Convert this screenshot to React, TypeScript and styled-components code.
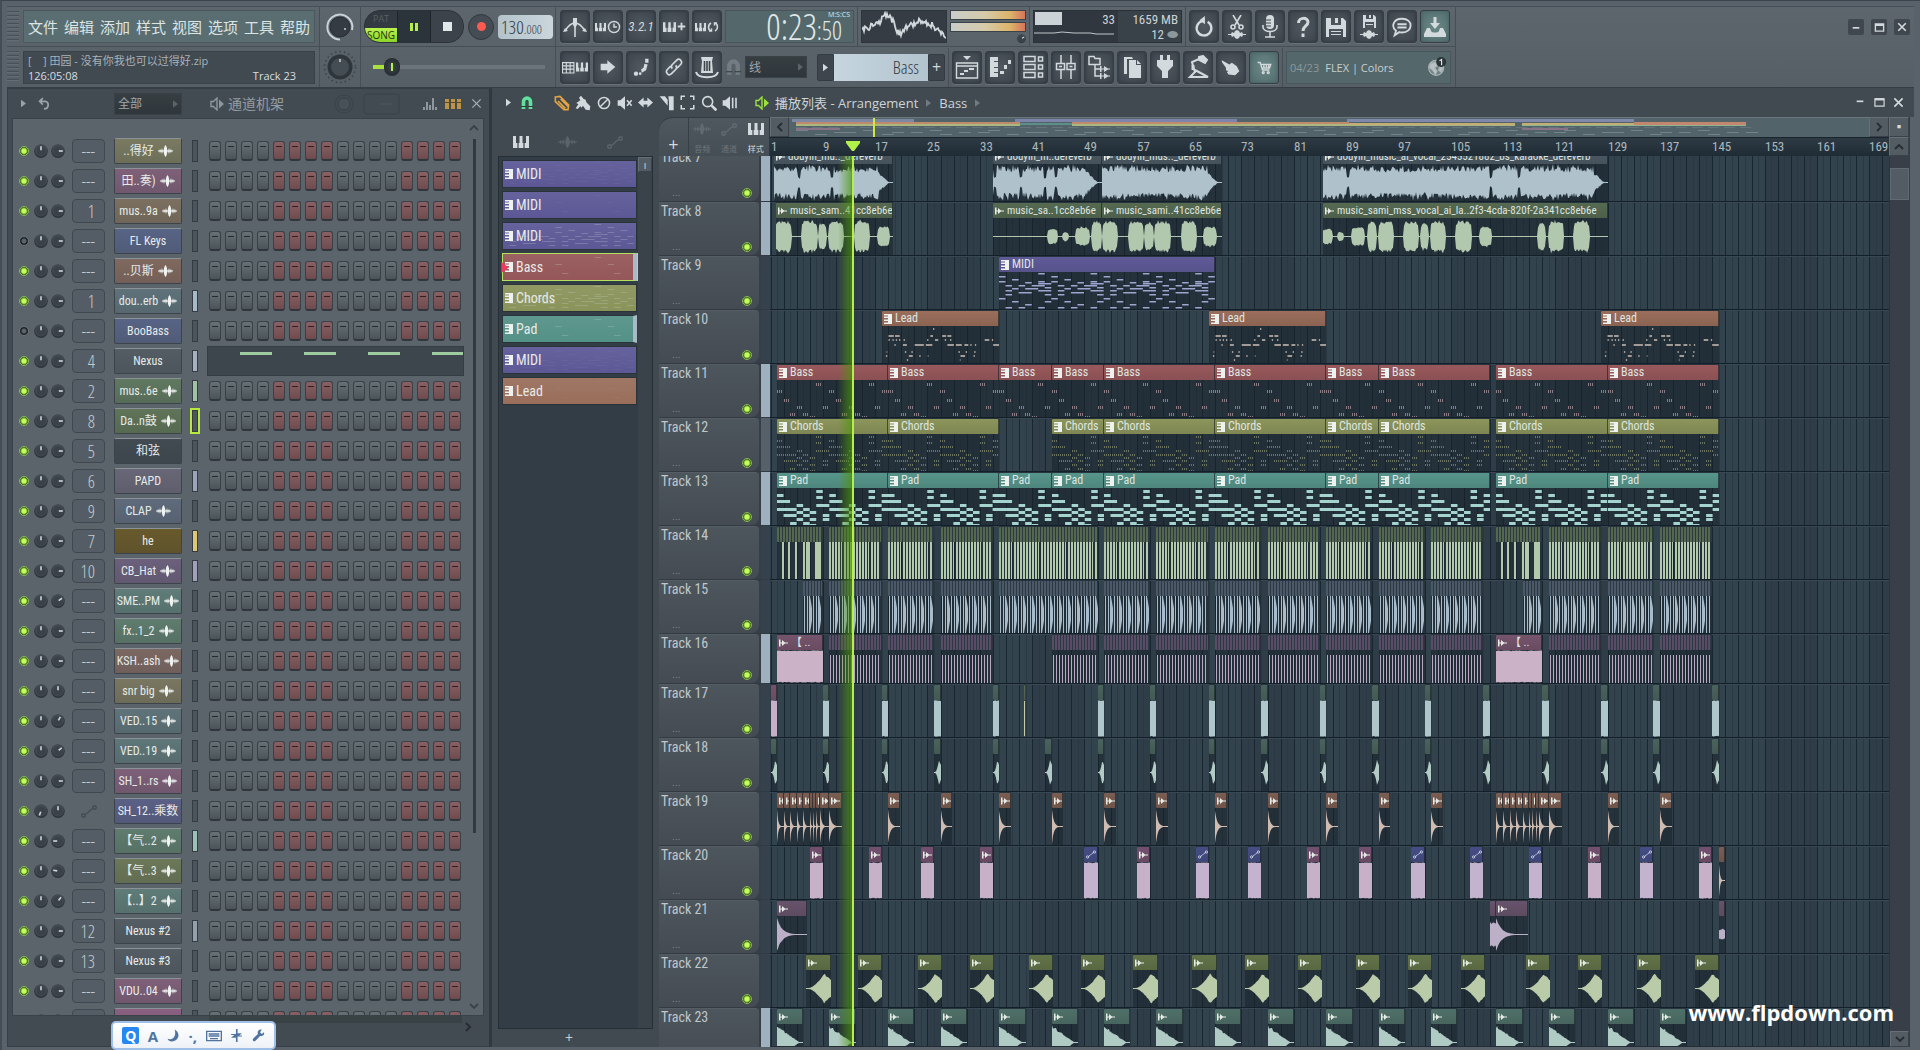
import React from 'react';
import styled, { createGlobalStyle, css } from 'styled-components';

const NARROW = '"Roboto Condensed", "Open Sans Condensed", "Noto Sans CJK SC", sans-serif';
const DIGITS = '"Open Sans Condensed Light", "Roboto Condensed", "Open Sans Condensed", sans-serif';
const NARROW_STACK = `"Noto Sans Condensed", "Noto Sans SemiCondensed", ${NARROW}`;
const DIGIT_STACK = DIGITS;
const SANS = '"Open Sans", "Noto Sans", "Noto Sans CJK SC", sans-serif';
const INK = '#d3dadd';
const GREEN = '#b4f04a';

const GlobalStyle = createGlobalStyle`
  * { box-sizing: border-box; }
  html, body { margin: 0; padding: 0; background: #3a4249; overflow: hidden; }
  body { font-family: ${SANS}; color: ${INK}; font-size: 12px; }
  button, select, input { font: inherit; color: inherit; margin: 0; padding: 0; border: 0; background: none; }
  button { cursor: pointer; }
  svg { display: block; flex: none; }
`;

/* ---------- timeline maths and generated drawings ---------- */

const BAR = 6.54;
const px = (bar: number) => Math.round(bar * BAR + 0.5);

const seeded = (seed: number) => {
  let s = seed * 7919 + 13;
  return () => {
    s = (s * 16807) % 2147483647;
    return (s % 10000) / 10000;
  };
};

const wavePath = (w: number, h: number, seed: number, env: (t: number, x: number) => number, rough = 0.25) => {
  const r = seeded(seed);
  const mid = h / 2;
  const top: string[] = [];
  const bottom: string[] = [];
  for (let x = 0; x <= w; x += 1) {
    const e = env(x / w, x);
    const a = Math.max(0.5, e * (mid - 1) * (1 - rough * r()));
    const b = Math.max(0.5, e * (mid - 1) * (1 - rough * r()));
    top.push(`${x} ${(mid - a).toFixed(1)}`);
    bottom.unshift(`${x} ${(mid + b).toFixed(1)}`);
  }
  return `M${top.join('L')}L${bottom.join('L')}Z`;
};

type Note = [number, number, number];

const PAD: Note[] = [
  [2, 6, 7], [6, 0, 1], [8, 6, 7], [12, 0, 2], [16, 3, 4], [16, 6, 8], [20, 0, 3], [20, 4, 5],
  [23, 3, 4], [23, 5, 6], [26, 1, 3], [26, 4, 5], [30, 3, 4], [30, 5, 6], [30, 7, 8], [26, 7, 8], [34, 2, 3], [34, 4, 5], [36, 5, 6],
];
const BASS: Note[] = [[3, 6, 7], [10, 0, 1], [19, 1, 2], [26, 3, 4], [26, 7, 8], [33, 2, 3], [33, 4, 5], [36, 5, 6]];
const KEYS: Note[] = [
  [1, 6, 7], [4, 0, 1], [7, 2, 3], [9, 6, 7], [9, 0, 1], [10, 4, 5], [11, 6, 8], [13, 1, 2], [13, 3, 4], [13, 5, 7], [15, 7, 8],
  [16, 2, 3], [16, 4, 6], [18, 1, 2], [18, 6, 8], [20, 3, 5], [22, 1, 2], [22, 7, 8], [26, 0, 1], [29, 2, 3], [29, 7, 8], [32, 4, 5], [35, 1, 2], [35, 3, 4], [35, 6, 7],
];
const LEAD: Note[] = [
  [2, 7.8, 8], [9, 1, 1.8], [9, 2, 2.7], [9, 7.4, 7.8], [9, 9.2, 9.8], [9, 10, 10.6], [13, 1, 1.2], [13, 1.6, 1.8], [13, 2.1, 2.3], [13, 2.6, 2.8],
  [13, 3.3, 3.5], [13, 6.9, 7.1], [13, 8.1, 8.6], [13, 9.6, 9.8], [13, 10.4, 10.6], [13, 15.7, 16.4], [13, 16.8, 17], [18, 1.9, 2.1], [18, 3.2, 3.8], [18, 5, 6.4],
  [18, 6.7, 7.7], [18, 10, 11], [18, 11.3, 12.2], [18, 12.6, 13.2], [18, 13.5, 13.7], [18, 14.2, 14.4], [18, 17, 18], [25, 0.7, 0.8], [25, 3.5, 3.7],
  [25, 4.5, 4.7], [25, 11.7, 11.9], [25, 12.8, 13], [25, 14.1, 14.3], [29, 0.6, 0.8], [29, 4.1, 4.7], [29, 5.7, 5.9], [29, 7, 7.1], [29, 12, 12.7], [29, 14, 14.2], [33, 3.8, 4], [33, 11.9, 12],
];

const noteRects = (notes: Note[], bars: number, period: number, ticks: boolean, color: string, tall: number) => {
  const out: React.ReactNode[] = [];
  for (let base = 0; base < bars; base += period) {
    notes.forEach(([y, a, b], i) => {
      const s = base + a;
      const e = Math.min(base + b, bars);
      if (s >= bars) return;
      if (!ticks) {
        out.push(<rect key={`${base}-${i}`} x={s * BAR} y={y} width={(e - s) * BAR} height={tall} fill={color} />);
        return;
      }
      for (let x = s * BAR; x < e * BAR - 1; x += 2) {
        out.push(<rect key={`${base}-${i}-${x}`} x={Math.round(x)} y={y} width={1} height={tall} fill={color} />);
      }
    });
  }
  return out;
};

/* ---------- shared pieces ---------- */

const Icon = ({ d, size = 24, fill, stroke = INK, sw = 1.6, children }: { d?: string; size?: number; fill?: string; stroke?: string; sw?: number; children?: React.ReactNode }) => (
  <svg width={size} height={size} viewBox="0 0 24 24" fill={fill ?? 'none'} stroke={stroke} strokeWidth={sw} aria-hidden="true">
    {d && <path d={d} />}
    {children}
  </svg>
);

const Piano = ({ w = 16, color = INK, gap = '#3d444c' }: { w?: number; color?: string; gap?: string }) => (
  <svg width={w} height={12} viewBox="0 0 16 12" aria-hidden="true">
    <path fill={color} d="M0 0H3V7H4.500V12H0ZM5.500 12V7H6.500V0H9.500V7H10.500V12ZM13 0H16V12H11.500V7H13Z" />
    <path stroke={gap} strokeWidth="0.500" d="M5 7v5M11 7v5" />
  </svg>
);

const WaveGlyph = ({ color = '#f1f4f2', w = 15 }: { color?: string; w?: number }) => (
  <svg width={w} height={12} viewBox="0 0 15 14" preserveAspectRatio="none" aria-hidden="true">
    <path fill={color} d="M0 6.300H1.500L2 4.500L2.800 6.300H3.300L4 3.500L4.800 6.300H5.600L6.400 2L7.500 0L8.600 2L9.400 6.300H10.200L11 3.500L11.700 6.300H12.200L13 4.500L13.500 6.300H15V7.700H13.500L13 9.500L12.200 7.700H11.700L11 10.500L10.200 7.700H9.400L8.600 12L7.500 14L6.400 12L5.600 7.700H4.800L4 10.500L3.300 7.700H2.800L2 9.500L1.500 7.700H0Z" />
  </svg>
);

const LinkGlyph = ({ color = '#59636b', w = 16 }: { color?: string; w?: number }) => (
  <svg width={w} height={13} viewBox="0 0 16 13" fill="none" stroke={color} strokeWidth="1.400" aria-hidden="true">
    <circle cx="2.500" cy="10.500" r="1.800" /><circle cx="13.500" cy="2.500" r="1.800" /><path d="M4 9.500 6.500 8l3-3L12 3.500" />
  </svg>
);

const Arrow = ({ color = '#a9b2b8', dir = 0, w = 6, h = 9 }: { color?: string; dir?: number; w?: number; h?: number }) => (
  <svg width={w} height={h} viewBox="0 0 6 9" aria-hidden="true"><path fill={color} d="M0 0 6 4.500 0 9Z" transform={`rotate(${dir} 3 4.500)`} /></svg>
);

const Chevron = ({ dir = 0, color = '#262d33' }: { dir?: number; color?: string }) => (
  <svg width={10} height={10} viewBox="0 0 10 10" fill="none" stroke={color} strokeWidth="1.800" aria-hidden="true"><path d="M3 1 7 5 3 9" transform={`rotate(${dir} 5 5)`} /></svg>
);

const Magnet = ({ color, w = 14 }: { color: string; w?: number }) => (
  <svg width={w} height={w} viewBox="0 0 14 14" fill="none" aria-hidden="true">
    <path stroke={color} strokeWidth="3.600" d="M3.500 13V6a3.500 4 0 0 1 7 0v7" />
    <path stroke="#2b3a38" strokeWidth="1" d="M1 10.500h5M8 10.500h5" />
  </svg>
);

const Speaker = ({ color }: { color: string }) => (
  <svg width={14} height={14} viewBox="0 0 14 14" aria-hidden="true">
    <path fill="none" stroke={color} strokeWidth="1.400" d="M1 4.500h2.500L7 1v12L3.500 9.500H1Z" /><path fill={color} d="M9 2.500 14 7 9 11.500Z" />
  </svg>
);

const Knob = ({ size, angle }: { size: number; angle: number }) => (
  <svg width={size} height={size} viewBox="0 0 14 14" aria-hidden="true">
    <circle cx="7" cy="7.300" r="6.700" fill="#2c3339" /><circle cx="7" cy="6.600" r="6" fill="#434b52" /><circle cx="7" cy="7" r="4.600" fill="#3a4148" />
    <path stroke="#cfd6da" strokeWidth="1.600" d="M7 2.200v4" transform={`rotate(${angle} 7 7)`} />
  </svg>
);

/* ---------- frame and top bar ---------- */

const Frame = styled.div`
  height: 100vh; display: flex; flex-direction: column; position: relative;
  padding: 5px 6px 3px 5px; background: #59616a; border-top: 1px solid #3b434b; border-left: 2px solid #444c54; overflow: hidden;
`;
const TopBar = styled.header`
  display: flex; height: 82px; flex: none; background: linear-gradient(#5d656d, #565e66);
  border-top: 1px solid #454d55; border-bottom: 1px solid #363d44;
`;
const BarColumn = styled.div<{ $w?: number }>`
  display: grid; grid-template-rows: 39px 41px; border-right: 1px solid #464e56; width: ${p => (p.$w ? `${p.$w}px` : 'auto')}; flex: none;
`;
const BarRow = styled.div<{ $pad?: string }>`
  display: flex; align-items: center; gap: 3px; padding: ${p => p.$pad ?? '0'};
  & + & { border-top: 1px solid #464e56; }
`;
const Grip = styled.span`
  width: 12px; height: 32px; margin-right: 1px; flex: none;
  background: repeating-linear-gradient(#474f57 0 1px, #646c74 1px 2px, transparent 2px 4px);
`;
const Divider = styled.span`width: 1px; height: 39px; background: #464e56; flex: none;`;
const MenuBar = styled.nav`
  flex: 1; height: 33px; display: flex; align-items: center; justify-content: space-between; padding: 0 4px;
  background: #5a6e72; border: 1px solid #4b595f;
`;
const MenuButton = styled.button`font-size: 15px; line-height: 24px; color: #dce4e4; font-family: "Noto Sans CJK SC", ${SANS};`;
const Hint = styled.div`
  flex: 1; height: 33px; background: #414951; border: 1px solid #384048; padding: 1px 4px; font-size: 11px; line-height: 15px; color: #c3cacf;
`;
const HintLine = styled.div`display: flex; justify-content: space-between; padding-right: 14px; white-space: pre; color: #d7dde0;
  &:first-child { color: #aab2b8; }`;
const Center = styled.div`display: grid; place-items: center; width: 100%;`;

const Transport = styled.div`
  display: flex; height: 33px; width: 100px; border-radius: 16px; overflow: hidden; border: 1px solid #2c3238; background: #333a41; flex: none;
`;
const ModeButton = styled.button`
  width: 32px; display: grid; grid-template-rows: 17px 14px; font-size: 9px; line-height: 16px; color: #596168; text-align: center;
`;
const ModeOn = styled.span`background: linear-gradient(#b9f24c, #8cd52a); color: #27330f; line-height: 14px; font-size: 10px;`;
const TransportButton = styled.button<{ $active?: boolean }>`
  flex: 1; display: grid; place-items: center; border-left: 1px solid #1f252a; background: ${p => (p.$active ? '#2c343b' : '#3c434b')};
`;
const RecordButton = styled.button`
  width: 26px; height: 26px; border-radius: 50%; border: 1px solid #30373e; background: #454c54; display: grid; place-items: center; margin: 0 1px; flex: none;
`;
const RecordDot = styled.span`width: 9px; height: 9px; border-radius: 50%; background: #ff5a50;`;
const Tempo = styled.div`
  width: 55px; height: 24px; border-radius: 4px; background: linear-gradient(90deg, #b4c3cb, #cad6dc); color: #323b44;
  font: 19px/24px ${DIGIT_STACK}; padding-left: 3px; flex: none; display: flex; align-items: baseline;
`;
const Small = styled.span`font-size: 13px;`;
const Volume = styled.input.attrs({ type: 'range' })`
  appearance: none; width: 172px; height: 20px; margin-left: 12px;
  background: linear-gradient(90deg, #a9e23c 0 12px, #6c747b 12px) center / 100% 4px no-repeat;
  &::-webkit-slider-thumb {
    appearance: none; width: 16px; height: 18px; border-radius: 8px;
    background: linear-gradient(90deg, transparent 7px, ${GREEN} 7px 9px, transparent 9px) center / 100% 8px no-repeat, radial-gradient(#3d464d, #1c2227);
  }
`;
const ToolButton = styled.button<{ $teal?: boolean }>`
  width: 30px; height: 33px; display: grid; place-items: center; flex: none; border-radius: 3px; border: 1px solid #363d45;
  background: ${p => (p.$teal ? 'radial-gradient(#6a8a87, #51696c)' : 'radial-gradient(#505860, #3c434b)')};
  box-shadow: inset 0 0 3px ${p => (p.$teal ? '#466062' : '#2f363d')}, 0 1px 0 #687078;
`;
const Stack = styled.span`display: flex; align-items: center; justify-content: center; gap: 1px;`;
const Countdown = styled.span`font: italic 13px/14px ${NARROW_STACK}; color: ${INK};`;
const TimePanel = styled.div`
  width: 129px; height: 33px; background: #54676b; border: 1px solid #47555b; display: flex; justify-content: flex-end;
  font: 36px/31px ${DIGIT_STACK}; color: #dfe7e8; padding-right: 3px; flex: none;
`;
const TimeSide = styled.span`display: flex; flex-direction: column; align-items: flex-end;`;
const TimeMinor = styled.span`font-size: 25px; line-height: 22px; padding-right: 8px;`;
const TimeUnit = styled.span`font: 7px/8px ${SANS};`;
const Scope = styled.div`width: 86px; height: 33px; background: #353c44; border: 1px solid #2e353c; flex: none;`;
const Meters = styled.div`width: 76px; height: 33px; display: flex; flex-direction: column; gap: 2px; flex: none; align-items: flex-end;`;
const Meter = styled.div`width: 100%; height: 10px; border: 1px solid #3b434a; background: linear-gradient(90deg, #c9ccca, #d6cbaa 45%, #dcb469 80%, #d8745a);`;
const Cpu = styled.div`
  width: 149px; height: 33px; background: #30373e; border: 1px solid #2a3137; display: grid; grid-template-columns: 84px 1fr; flex: none;
  font: 13px/15px ${NARROW_STACK}; color: #ccd3d7;
`;
const CpuCell = styled.div<{ $alt?: boolean }>`background: ${p => (p.$alt ? '#394149' : '#30373e')}; padding: 1px 3px 0 0; text-align: right; position: relative;`;
const CpuBlock = styled.span`position: absolute; left: 1px; top: 1px; width: 27px; height: 13px; background: #ccd3d6;`;
const DarkSelect = styled.select<{ $w: number }>`
  appearance: none; width: ${p => p.$w}px; height: 22px; background: linear-gradient(#363e42, #30373c); border: 1px solid #3a4247;
  padding-left: 3px; font-size: 12px; color: #9fa7ac; flex: none;
`;
const SelectWrap = styled.label<{ $gap?: number }>`position: relative; display: flex; align-items: center; flex: none; margin-left: ${p => p.$gap ?? 0}px;
  & > svg { position: absolute; right: 4px; pointer-events: none; }`;
const PatternBox = styled.div`display: flex; width: 128px; height: 27px; margin-left: 7px; flex: none;`;
const PatternStep = styled.button`width: 17px; background: #3e454d; border: 1px solid #343b42; border-radius: 2px; display: grid; place-items: center; font-size: 16px; line-height: 16px;`;
const PatternSelect = styled.select`
  appearance: none; flex: 1; background: linear-gradient(90deg, #c6d5de, #b3c4cf); color: #333c45; font: 18px/24px ${DIGIT_STACK}; text-align: right; text-align-last: right; padding-right: 9px;
`;
const News = styled.div`
  width: 165px; height: 33px; background: #54676a; border: 1px solid #48575c; display: flex; align-items: center; gap: 6px; padding: 0 3px; font-size: 11px; color: #c7d0d2; flex: none;
`;
const Dim = styled.span`color: #8b999c;`;
const Push = styled.span<{ $pr?: number }>`margin-left: auto; display: flex; align-items: center; gap: 7px; padding-right: ${p => p.$pr ?? 0}px;`;
const Bottom = styled.span`margin-top: auto;`;
const WindowButton = styled.button`width: 16px; height: 16px; background: #40474f; border-radius: 2px; display: grid; place-items: center;`;
const WindowButtons = styled.div`margin-left: auto; display: flex; gap: 7px; height: 40px; align-items: center; padding-right: 4px;`;

/* ---------- work area ---------- */

const Work = styled.main`flex: 1; min-height: 0; display: flex;`;
const Rack = styled.section`width: 485px; flex: none; display: flex; flex-direction: column; background: #434b52; border: 1px solid #373e45; border-right: 3px solid #31383e; padding: 0 5px 0 4px;`;
const PanelHead = styled.div`height: 29px; flex: none; display: flex; align-items: center; color: #8d959b;`;
const RackTitle = styled.h2`margin: 0; font-size: 14px; line-height: 18px; font-weight: 400; color: #949ca2;`;
const RackBody = styled.div`flex: 1; min-height: 0; background: #5b646b; border: 1px solid #3a4148; display: flex; overflow: hidden;`;
const ChannelList = styled.div`flex: 1; padding-top: 17px;`;
const ChannelRow = styled.div`height: 30px; display: flex; align-items: center; padding-left: 6px;`;
const Led = styled.button<{ $on: boolean }>`
  width: 10px; height: 10px; border-radius: 50%; margin-right: 5px; flex: none;
  background: ${p => (p.$on ? 'radial-gradient(#c4ff5e 0 2px, #2f5212 4px)' : 'radial-gradient(#5b646b 0 2px, #1d2226 3px)')};
  border: 1px solid ${p => (p.$on ? '#86b957' : '#6b7379')};
`;
const KnobPair = styled.div`display: flex; gap: 3px; margin-right: 7px;`;
const MixerSlot = styled.button`
  width: 33px; height: 24px; border: 1px solid #40484f; border-radius: 4px; background: #545d65; margin-right: 9px; flex: none;
  font: 18px/20px ${DIGIT_STACK}; color: #c3cbd0; text-align: right; padding-right: 9px;
`;
const MixerLink = styled.span`width: 33px; margin-right: 9px; display: grid; place-items: center; flex: none;`;
const ChannelButton = styled.button<{ $c: string }>`
  width: 68px; height: 26px; margin-right: 10px; flex: none; display: flex; align-items: center; justify-content: center; gap: 4px;
  background: linear-gradient(${p => p.$c}, color-mix(in srgb, ${p => p.$c} 86%, #20262b)); border: 1px solid #3c434a; border-top-color: #8b9398; border-radius: 2px;
  font: 12px/18px ${NARROW_STACK}; color: #e6ebea; white-space: nowrap;
`;
const SelectLed = styled.button<{ $c?: string; $sel?: boolean }>`
  width: 6px; height: 22px; margin-right: 11px; flex: none; background: ${p => p.$c ?? '#4c555c'}; border: 1px solid #343b42;
  outline: ${p => (p.$sel ? '2px solid #b7ea3f' : 'none')};
`;
const Steps = styled.div`display: flex; gap: 4px;`;
const Step = styled.button<{ $red: boolean }>`
  width: 12px; height: 20px; border-radius: 3px; border: 1px solid #394046; border-bottom: 2px solid #30363b;
  background: ${p => (p.$red
    ? 'linear-gradient(transparent 4px, #331f22 4px 5px, transparent 5px) center / 6px 100% no-repeat, linear-gradient(#8a6064, #6e4b4f)'
    : 'linear-gradient(transparent 4px, #23292d 4px 5px, transparent 5px) center / 6px 100% no-repeat, linear-gradient(#687176, #4b5459)')};
`;
const MiniRoll = styled.div`width: 257px; height: 30px; margin-left: -2px; background: #3d464d; border: 1px solid #353d44;`;
const RackScroll = styled.div`width: 18px; display: flex; flex-direction: column; align-items: center; padding: 4px 0;`;
const RackThumb = styled.span`width: 3px; background: #323940; flex: 0.805; margin-top: 6px;`;
const RackFoot = styled.div`height: 30px; flex: none; display: flex; justify-content: space-between; padding: 0 10px 0 197px;`;
const FootTrack = styled.span`width: 257px; height: 7px; background: #394244;`;

const Playlist = styled.section`flex: 1; min-width: 0; display: flex; flex-direction: column; background: #424a51;`;
const PlayHead = styled(PanelHead)`padding-left: 13px; gap: 0;`;
const IconButton = styled.button<{ $w?: number }>`width: ${p => p.$w ?? 21}px; height: 22px; display: grid; place-items: center; flex: none;`;
const Spacer = styled.span<{ $w: number }>`width: ${p => p.$w}px; flex: none;`;
const Crumb = styled.h2`margin: 0; font-size: 13px; line-height: 18px; font-weight: 400; color: #cdd4d8; display: flex; align-items: center; gap: 8px; padding-left: 3px; white-space: nowrap;`;
const PlayBody = styled.div`flex: 1; min-height: 0; display: flex;`;
const Picker = styled.aside`width: 167px; flex: none; padding: 0 6px 0 6px; display: flex; flex-direction: column;`;
const PickerTabs = styled.div`height: 39px; display: flex; align-items: flex-end; padding: 0 0 3px 7px; gap: 16px;`;
const PickerBox = styled.div`flex: 1; background: #323d46; border: 1px solid #262f36; display: flex; justify-content: space-between;`;
const PatternList = styled.div`width: 141px; padding: 3px 0 0 3px; display: flex; flex-direction: column; gap: 3px;`;
const PatternItem = styled.button<{ $c: string; $sel?: boolean; $strip?: boolean }>`
  width: 135px; height: 28px; display: flex; align-items: center; gap: 3px; padding-left: 2px; position: relative; text-align: left;
  background: linear-gradient(color-mix(in srgb, ${p => p.$c} 94%, #fff), ${p => p.$c}); border: 1px solid ${p => (p.$sel ? '#b5e35d' : '#2a333a')};
  ${p => p.$strip && css`border-right: 4px solid #a9bac6;`}
  ${p => p.$sel && css`box-shadow: 1px 0 0 #b5e35d;`}
  font: 14px/20px ${NARROW_STACK}; color: #e7ebea;
`;
const Texture = styled.svg`position: absolute; inset: 0; width: 100%; height: 100%; opacity: 0.25;`;
const Selected = styled.span`position: absolute; left: -2px; top: 8px;`;
const PickerScroll = styled.div`width: 14px; background: #3a424a; font-size: 10px;`;
const ScrollButton = styled.button<{ $w?: number; $h?: number }>`
  width: ${p => p.$w ?? 19}px; height: ${p => p.$h ?? 19}px; background: #535b63; border: 1px solid #6a727a; border-color: #666e76 #3a4148 #3a4148 #666e76; display: grid; place-items: center; flex: none;
`;
const AddPattern = styled.button`height: 18px; width: 142px; font-size: 14px; line-height: 14px; color: #c9d0d4;`;

const Arranger = styled.div`flex: 1; min-width: 0; display: flex; flex-direction: column;`;
const ArrangerHead = styled.div`height: 39px; flex: none; display: flex;`;
const TabBlock = styled.div`
  width: 111px; flex: none; display: flex; background: linear-gradient(#4f575f, #464e55); border-top: 1px solid #333a41; border-right: 1px solid #30373d;
  border-top-left-radius: 14px;
`;
const AddTrack = styled.button`width: 30px; border-right: 1px solid #373e45; font-size: 18px; line-height: 20px; padding-top: 14px;`;
const TabLabels = styled.div`flex: 1; display: grid; grid-template-columns: repeat(3, 1fr); justify-items: center; align-items: center; font-size: 8px; line-height: 10px; color: #6c747b; padding-top: 2px;`;
const TabLabel = styled.button<{ $on?: boolean }>`display: grid; grid-template-rows: 14px 10px; justify-items: center; align-items: center; gap: 8px; color: ${p => (p.$on ? '#d3dadd' : '#6c747b')};`;
const RulerBlock = styled.div`flex: 1; min-width: 0; display: flex; flex-direction: column;`;
const MapRow = styled.div`height: 20px; display: flex;`;
const MiniMap = styled.div`flex: 1; min-width: 0; background: #53636a; border-top: 1px solid #6a777d; overflow: hidden;`;
const RulerRow = styled.div`height: 19px; display: flex;`;
const Ruler = styled.div`flex: 1; min-width: 0; background: linear-gradient(#2d3a43, #1f2c35); border-top: 1px solid #19242c; display: flex; overflow: hidden; position: relative; font: 13px/17px ${NARROW_STACK}; color: #abb7be; padding-left: 1px;`;
const RulerMark = styled.span`flex: none;`;
const HeadMarker = styled.span`position: absolute; left: 76px; top: 3px;`;
const ArrangerBody = styled.div`flex: 1; min-height: 0; display: flex; overflow: hidden;`;
const TrackHeads = styled.div`width: 111px; flex: none; overflow: hidden; background: #363f47;`;
const Scrolled = styled.div`margin-top: -8px;`;
const TrackHead = styled.div<{ $h: number }>`height: ${p => p.$h}px; display: flex; border-bottom: 1px solid #333a41;`;
const TrackLabel = styled.div`
  width: 100px; background: linear-gradient(#4e565d, #444b52); border-radius: 0 4px 8px 0; border-top: 1px solid #565e65; padding: 0 3px 0 2px; display: flex; flex-direction: column; justify-content: space-between;
  font: 14px/17px ${NARROW_STACK}; color: #bfc7cc;
`;
const TrackFoot = styled.div`display: flex; justify-content: space-between; align-items: center; padding: 0 4px 2px 11px; color: #7b838a; line-height: 12px; font-size: 11px;
  & > button { margin: 0; }`;
const TrackStrip = styled.span<{ $c: string }>`width: 9px; margin-left: 2px; background: ${p => p.$c};`;
const Canvas = styled.div`flex: 1; min-width: 0; position: relative; overflow: hidden; background: #2e3d48; border-bottom: 1px solid #242d34;`;
const GridSvg = styled.svg`position: absolute; left: 0; top: 0;`;
const Lane = styled.div<{ $h: number }>`height: ${p => p.$h}px; position: relative; border-bottom: 1px solid #13202a; box-shadow: 0 1px 0 #384752;`;
const ClipBox = styled.div`position: absolute; top: 0; bottom: 0; display: flex; flex-direction: column; background: rgba(24, 34, 40, 0.5); overflow: hidden;`;
const ClipHead = styled.div<{ $c: string; $cut?: boolean }>`
  height: 15px; flex: none; margin-top: 1px; background: ${p => (p.$cut ? `repeating-linear-gradient(90deg, ${p.$c} 0 2px, #2d3942 2px 3px)` : `linear-gradient(${p.$c}, color-mix(in srgb, ${p.$c} 90%, #000))`)};
  border-right: 1px solid rgba(20, 28, 34, 0.6); border-radius: 1px; display: flex; align-items: center; gap: 3px; padding-left: 2px; overflow: hidden; white-space: nowrap;
`;
const ClipText = styled.span<{ $small?: boolean }>`font: ${p => (p.$small ? 11 : 12)}px/15px ${NARROW_STACK}; color: #dfe5e0;`;
const Playhead = styled.div`position: absolute; top: 0; bottom: 0; left: 68px; width: 16px; background: linear-gradient(90deg, rgba(90, 150, 20, 0), rgba(78, 150, 12, 0.65) 13px, rgba(70, 130, 10, 0.8) 14px, ${GREEN} 14px); pointer-events: none;`;
const VScroll = styled.div`width: 20px; flex: none; background: #383f48; display: flex; flex-direction: column; border-left: 1px solid #2b3239;`;
const VThumb = styled.span`height: 32px; margin-top: 12px; background: #535b65; border: 1px solid #626a73;`;
const RightEdge = styled.span`width: 5px; flex: none; background: #59616a; border-left: 1px solid #363d44;`;

const ImeBar = styled.div`
  position: absolute; left: 109px; bottom: 0; width: 165px; height: 29px; background: linear-gradient(#fff, #eef2f7); border: 2px solid #9fbfe8; border-radius: 5px;
  display: flex; align-items: center; justify-content: space-around; padding: 0 5px; color: #50749f;
`;
const ImeLogo = styled.button`width: 17px; height: 17px; border-radius: 2px; background: #2787f0; color: #fff; font: bold 14px/16px ${SANS};`;
const ImeText = styled.button`font: bold 15px/18px ${SANS}; color: #50749f;`;
const Watermark = styled.a`position: absolute; right: 26px; bottom: 23px; font: 700 22px/30px ${SANS}; color: #fff; text-decoration: none;`;

/* ---------- toolbar icons ---------- */

const toolsTopLeft: [string, React.ReactNode][] = [
  ['Metronome', <Icon key="a"><path d="M2 16c3-5 6-8 10-8s7 3 10 8M12 9v13" /><path fill={INK} stroke="none" d="M10 3h4v7l-2 3-2-3ZM0 17l5-1-3-3ZM24 17l-5-1 3-3Z" /></Icon>],
  ['Wait for input', <Stack key="b"><Piano w={11} /><Icon size={14} sw={2.4}><circle cx="12" cy="12" r="9.500" /><path d="M12 6v6h5" /></Icon></Stack>],
  ['Countdown', <Countdown key="c">3.2.1</Countdown>],
  ['Overdub', <Stack key="d"><Piano w={13} /><Icon size={9} sw={5} d="M12 2v20M2 12h20" /></Stack>],
  ['Loop record', <Stack key="e"><Piano w={11} /><Icon size={12} sw={3} d="M8 4C1 8 2 18 8 20M16 20c7-4 6-14 0-16M4 20h5v-5M20 4h-5v5" /></Stack>],
];
const toolsBottomLeft: [string, React.ReactNode][] = [
  ['Typing keyboard', <Stack key="a"><Icon size={13} sw={2} d="M1 3h21v19H1ZM1 9h21M1 15h21M8 3v19M15 3v19" /><Piano w={12} /></Stack>],
  ['Forward', <Icon key="b" size={16} fill={INK} stroke="none" d="M1 7h10V2l12 10-12 10v-5H1Z" />],
  ['Glide', <Icon key="c" size={20} fill={INK} stroke="none"><path d="M17 2h4v5h-4ZM16 8l4 1-2 7-5 3-1-4 3-2Z" /><circle cx="6" cy="20" r="2.600" /><circle cx="11" cy="20" r="1.600" /></Icon>],
  ['Link', <Icon key="d" size={20} sw={2} d="M10 14c-2-2-1-4 0-5l5-5c2-2 4-2 5 0 2 2 1 4 0 5l-4 4M14 10c2 2 1 4 0 5l-5 5c-2 2-4 2-5 0-2-2-1-4 0-5l4-4" />],
  ['Hat', <Icon key="e"><path fill={INK} stroke="none" d="M6 2h12l-1 4 1 12H6L7 6Z" /><path stroke="#3d444c" d="M9.500 6v10M12 6v10M14.500 6v10" /><path strokeWidth="2" d="M1 17c2 7 20 7 22 0" /></Icon>],
];
const toolsTopRight: [string, React.ReactNode][] = [
  ['Undo', <Icon key="a" size={22} sw={2.6}><path d="M10 5.500a8 8 0 1 0 6 .8" /><path fill={INK} stroke="none" d="M13 0v9L7 4.500Z" /></Icon>],
  ['Cut', <Icon key="b"><path d="m8 0 6 10M16 0l-6 10" /><circle cx="8" cy="12" r="2" /><circle cx="16" cy="12" r="2" /><path fill={INK} stroke="none" d="M3 19h3l1-2 2 1 1-2 2-1 2 1 1 2 2-1 1 2h3v1h-3l-1 2-2-1-1 2-2 1-2-1-1-2-2 1-1-2H3Z" /></Icon>],
  ['Record', <Icon key="c"><rect x="8" y="0" width="8" height="14" rx="4" fill={INK} stroke="none" /><path stroke="#3d444c" strokeWidth="1" d="M8 5h5M8 8h5M8 11h5" /><path d="M5 10v2c0 6 14 6 14 0v-2M12 17v5M7 22h10" /></Icon>],
  ['Help', <Icon key="d" sw={3}><path d="M7.500 8c0-6 9.500-6 9.500-1 0 4-5 4-5 9" /><path d="M12 18.500v3.500" /></Icon>],
  ['Save', <Icon key="e" fill={INK} stroke="none"><path fillRule="evenodd" d="M2 3h17l3 3v16H2ZM7 3v7h10V3h-3v5h-3V3ZM5 14v8h14v-8ZM7 16h10v1H7ZM7 19h10v1H7Z" /></Icon>],
  ['Save as', <Icon key="f" fill={INK} stroke="none"><path fillRule="evenodd" d="M6 0h11l2 2v11H6ZM9 0v4h7V0h-2v3h-2V0ZM8 7v6h9V7ZM9 9h7v1H9Z" /><path d="M3 19h3l1-2 2 1 1-2 2-1 2 1 1 2 2-1 1 2h3v1h-3l-1 2-2-1-1 2-2 1-2-1-1-2-2 1-1-2H3Z" /></Icon>],
  ['Chat', <Icon key="g" size={22} sw={2}><path d="M12 3c13 0 12 15 0 15-1 0-2 0-3-.4L4 21l1.500-5C0 12 2 3 12 3Z" /><path d="M7 9h10M7 12.500h10" /></Icon>],
  ['Download', <Icon key="h" fill={INK} stroke="none" d="M10.500 2h3v6H17l-5 6-5-6h3.500ZM4 13h3l1 3c1 2 7 2 8 0l1-3h3l3 6v3H1v-3Z" />],
];
const toolsBottomRight: [string, React.ReactNode][] = [
  ['Playlist', <Icon key="a" sw={1.4}><path d="M1.500 8h21v15h-21ZM1.500 11h21" /><path strokeWidth="2" d="M5 19h4M9 16h4M14 14h5" /><path fill={INK} stroke="none" d="M8 1h8l-4 4Z" /></Icon>],
  ['Piano roll', <Icon key="b" fill={INK} stroke="none"><path d="M2 2h8v4H6v1h4v5H6v1h4v4H6v1h4v4H2Z" /><path d="M12 16h4v3h-4ZM16 10h3v4h-3ZM20 5h3v4h-3Z" /></Icon>],
  ['Channel rack', <Icon key="c" sw={1.5} d="M3 1.500h11v5H3ZM3 9.500h11v5H3ZM3 17.500h11v5H3ZM17.500 2h4v4h-4ZM17.500 10h4v4h-4ZM17.500 18h4v4h-4Z" />],
  ['Mixer', <Icon key="d" sw={1.5} d="M7 0v8M7 15v9M17 0v8M17 15v9M2.500 8.500h8v6h-8ZM13 8.500h8v6h-8ZM5 11.500h3M15.500 11.500h3" />],
  ['Browser', <Icon key="e" sw={1.5}><path d="M2 1.500h5l1 2h5v6H2ZM8 10v11h6M8 14h6" /><path fill={INK} stroke="none" d="M13 11h1.500v2.500H17V11l4 2.500h2v1h-2L17 17v-2.500h-2.500V17H13ZM13 18h1.500v2.500H17V18l4 2.500h2v1h-2L17 24v-2.500h-2.500V24H13Z" /></Icon>],
  ['Project', <Icon key="f" fill={INK} stroke="none" d="M4 2h8l1 2H7v15H4ZM9 5h7v5h5v13H9ZM17 5l4 4h-4Z" />],
  ['Plugins', <Icon key="g" fill={INK} stroke="none" d="M7 0h3v5h4V0h3v5h3v6l-5 5v7H9v-7l-5-5V5h3Z" />],
  ['Tempo tapper', <Icon key="h" sw={2}><path fill={INK} d="M13 2l4-1 4 4-2 3-6-3Z" /><path d="M13 4 6 7l1 4 2 6-5 5h18L9 15" /><path strokeWidth="3" d="M7 10v5" /></Icon>],
  ['Touch', <Icon key="i" size={20} fill={INK} stroke="none" d="M1 4 10 9l3-2 6 4 3 6-5 5-8-1-2-3 2-1-3-1v-3L1 6Z" />],
  ['Shop', <Icon key="j" size={15} sw={2.2}><path d="M1 4h4l4 12h11M6 7h16l-2 6H8M11 7v6M15 7v6M19 7l-1 6" /><circle cx="10" cy="20" r="1.500" /><circle cx="18" cy="20" r="1.500" /></Icon>],
];
const playTools: [string, React.ReactNode][] = [
  ['Draw', <Icon key="a" size={16} stroke="#e3a446" sw={2.4} d="M2 3 9 2 22 15l-1 7-6 0L2 10ZM6 9 17 20M10 6l11 11" />],
  ['Paint', <Icon key="b" size={16} fill={INK} stroke="none" d="M9 1l4 5 3 1 1 4 6 6-1 6-6-1-4-6-2 3-2-2-4 4-3-1 4-6-3-2 6-4-2-4Z" />],
  ['Delete', <Icon key="c" size={14} sw={2.6}><circle cx="12" cy="12" r="9.500" /><path d="M5 19 19 5" /></Icon>],
  ['Mute', <Icon key="d" size={16} sw={2.4}><path fill={INK} stroke="none" d="M1 8h4l7-6v20l-7-6H1Z" /><path d="m15 8 7 8M22 8l-7 8" /></Icon>],
  ['Slip', <Icon key="e" size={15} fill={INK} stroke="none" d="M0 12 9 4v5h6V4l9 8-9 8v-5H9v5Z" />],
  ['Slice', <Icon key="f" size={16} fill={INK} stroke="none" d="M1 2h8l4 5v9ZM14 2h8v21h-7V10Z" />],
  ['Select', <Icon key="g" size={15} sw={2.4} d="M2 8V2h6M16 2h6v6M22 16v6h-6M8 22H2v-6" />],
  ['Zoom', <Icon key="h" size={16} sw={2.4}><circle cx="10" cy="10" r="7.500" /><path strokeWidth="4" d="m16 16 7 7" /></Icon>],
  ['Playback', <Icon key="i" size={16} sw={2.4}><path fill={INK} stroke="none" d="M1 8h4l7-6v20l-7-6H1Z" /><path d="M16 4v16M21 4v16" /></Icon>],
];

const Tools = ({ items, tealLast }: { items: [string, React.ReactNode][]; tealLast?: boolean }) => (
  <>
    {items.map(([name, icon], i) => (
      <ToolButton key={name} aria-label={name} $teal={tealLast && i === items.length - 1}>{icon}</ToolButton>
    ))}
  </>
);

/* ---------- channels ---------- */

type Channel = { name: string; c: string; mix: string; wave?: boolean; off?: boolean; led?: string; sel?: boolean; roll?: boolean; a?: number; b?: number };
const channels: Channel[] = [
  { name: '..得好', c: '#797a60', mix: '---', wave: true },
  { name: '田..奏)', c: '#7e6079', mix: '---', wave: true },
  { name: 'mus..9a', c: '#7c7060', mix: '1', wave: true },
  { name: 'FL Keys', c: '#586485', mix: '---', off: true },
  { name: '..贝斯', c: '#80695f', mix: '---', wave: true },
  { name: 'dou..erb', c: '#5f727a', mix: '1', wave: true, led: '#a5bcc8' },
  { name: 'BooBass', c: '#586485', mix: '---', off: true },
  { name: 'Nexus', c: '#545d64', mix: '4', led: '#a3b2be', roll: true },
  { name: 'mus..6e', c: '#607860', mix: '2', wave: true, led: '#9fc3a0' },
  { name: 'Da..n鼓', c: '#5f7458', mix: '8', wave: true, sel: true },
  { name: '和弦', c: '#424b52', mix: '5' },
  { name: 'PAPD', c: '#686777', mix: '6', led: '#9ca3ba' },
  { name: 'CLAP', c: '#5f6b7c', mix: '9', wave: true },
  { name: 'he', c: '#695a2c', mix: '7', led: '#dcc873' },
  { name: 'CB_Hat', c: '#6c607c', mix: '10', wave: true, led: '#a19fba' },
  { name: 'SME..PM', c: '#5f7c78', mix: '---', wave: true, b: 55 },
  { name: 'fx..1_2', c: '#5f7c6e', mix: '---', wave: true },
  { name: 'KSH..ash', c: '#7c6862', mix: '---', wave: true },
  { name: 'snr big', c: '#797760', mix: '---', wave: true, b: 0 },
  { name: 'VED..15', c: '#5f747a', mix: '---', wave: true, b: 30 },
  { name: 'VED..19', c: '#5f7779', mix: '---', wave: true, b: 50 },
  { name: 'SH_1..rs', c: '#7e6079', mix: '---', wave: true },
  { name: 'SH_12..乘数', c: '#5b6186', mix: 'link', a: 200, b: 0 },
  { name: '【气..2', c: '#5f7c6e', mix: '---', wave: true, led: '#9ac3b6', b: -90 },
  { name: '【气..3', c: '#6c7858', mix: '---', wave: true, b: -80 },
  { name: '【..】2', c: '#5f7c78', mix: '---', wave: true, b: 40 },
  { name: 'Nexus #2', c: '#545d64', mix: '12', led: '#93a1ac' },
  { name: 'Nexus #3', c: '#545d64', mix: '13' },
  { name: 'VDU..04', c: '#7e6079', mix: '---', wave: true },
  { name: '', c: '#8a6080', mix: '' },
];

const ChannelRack = () => (
  <Rack>
    <PanelHead>
      <IconButton $w={22} aria-label="Rack menu"><Arrow color="#9ba3a9" w={5} /></IconButton>
      <IconButton $w={20} aria-label="Undo"><Icon size={13} stroke="#9ba3a9" sw={3.2} d="M9 2 3 8l6 6M3 8h10c8 0 8 14-2 14" /></IconButton>
      <SelectWrap $gap={60}>
        <DarkSelect $w={68} aria-label="Channel filter" defaultValue="全部"><option>全部</option></DarkSelect>
        <Arrow color="#5b646a" w={5} h={8} />
      </SelectWrap>
      <Spacer $w={24} />
      <IconButton $w={22} aria-label="Listen"><Speaker color="#8e969c" /></IconButton>
      <RackTitle>通道机架</RackTitle>
      <Push>
        <svg width="98" height="22" viewBox="0 0 98 22" fill="none" stroke="#3a4249" aria-hidden="true"><circle cx="26" cy="11" r="9" /><circle cx="26" cy="11" r="6" fill="#495158" /><rect x="46" y="1" width="35" height="20" rx="3" /><path stroke="#515a61" d="M63 11h11" /></svg>
        <svg width="15" height="12" viewBox="0 0 15 12" fill="#8f979d" aria-hidden="true"><path d="M0 9h2v3H0ZM3 4h2v8H3ZM6 7h2v5H6ZM9 0h2v12H9ZM12 9h2v3h-2Z" /></svg>
        <svg width="16" height="10" viewBox="0 0 16 10" aria-hidden="true"><path fill="#bd9445" d="M0 0h4v10H0ZM6 0h4v10H6ZM12 0h4v10h-4Z" /><path stroke="#5c4a26" d="M0 3.500h4M6 3.500h4M12 3.500h4" /></svg>
        <IconButton $w={16} aria-label="Close rack"><Icon size={11} stroke="#a4acb1" sw={3} d="m3 3 18 18M21 3 3 21" /></IconButton>
      </Push>
    </PanelHead>
    <RackBody>
      <ChannelList>
        {channels.map((ch, i) => (
          <ChannelRow key={i}>
            <Led $on={!ch.off} aria-label={`Enable ${ch.name}`} />
            <KnobPair><Knob size={14} angle={ch.a ?? 0} /><Knob size={14} angle={ch.b ?? 90} /></KnobPair>
            {ch.mix === 'link' ? <MixerLink><LinkGlyph color="#454d54" /></MixerLink> : <MixerSlot aria-label={`Mixer track for ${ch.name}`}>{ch.mix}</MixerSlot>}
            <ChannelButton $c={ch.c} aria-label={ch.name || 'Channel'}>{ch.name}{ch.wave && <WaveGlyph />}</ChannelButton>
            <SelectLed $c={ch.led} $sel={ch.sel} aria-label={`Select ${ch.name}`} />
            {ch.roll ? (
              <MiniRoll>
                <svg width="255" height="28" aria-hidden="true"><path stroke="#9ecb9f" strokeWidth="3" d="M32 6.500h32M96 6.500h32M160 6.500h32M224 6.500h31" /></svg>
              </MiniRoll>
            ) : (
              <Steps>{Array.from({ length: 16 }, (_, s) => <Step key={s} $red={Math.floor(s / 4) % 2 === 1} aria-label={`Step ${s + 1}`} />)}</Steps>
            )}
          </ChannelRow>
        ))}
      </ChannelList>
      <RackScroll><Chevron dir={-90} color="#3a4148" /><RackThumb /><Bottom><Chevron dir={90} color="#3a4148" /></Bottom></RackScroll>
    </RackBody>
    <RackFoot><FootTrack /><IconButton $w={12} aria-label="Scroll right"><Chevron color="#252b30" /></IconButton></RackFoot>
  </Rack>
);

/* ---------- clips ---------- */

type Shape = 'song' | 'voice' | 'block' | 'decay' | 'swell' | 'blip' | 'ramp' | 'bars' | 'sparse' | 'lines' | 'spindle' | 'pad' | 'chords' | 'bass' | 'lead' | 'keys';
type Clip = { s: number; e: number; c: string; w: string; shape: Shape; label?: string; icon?: 'pattern' | 'audio' | 'auto'; bursts?: number[][]; dips?: number[] };

const PatternIcon = () => (
  <svg width={8} height={10} viewBox="0 0 8 10" aria-hidden="true"><path fill="#eef2ee" d="M0 0h8v10H0V8.500h4V7H0V5.500h4V4H0V2.500h4V1.500H0Z" /></svg>
);
const AudioIcon = ({ color = '#e6ebe6' }: { color?: string }) => (
  <svg width={9} height={8} viewBox="0 0 9 8" aria-hidden="true"><path fill={color} d="M0 0.500h1.500v2.900H3V1l3 2.400h3v1.200H6L3 7V4.600H1.500V7.500H0Z" /></svg>
);

const burstEnv = (bursts: number[][]) => (_: number, x: number) => {
  const b = bursts.find(([s, e]) => x >= s && x <= e);
  if (!b) return 0.02;
  const edge = Math.min(1, (x - b[0] + 1) / 3, (b[1] - x + 1) / 3);
  return b[2] * (0.6 + 0.3 * edge + (x % 4 === 0 ? 0.08 : 0));
};
const songEnv = (w: number, dips: number[] = []) => (t: number, x: number) => {
  if (dips.some(d => Math.abs(d - x) < 2)) return 0.35;
  if (x > w - 5) return 0.02;
  if (x > w - 15) return 0.75 * ((w - 4 - x) / 12);
  return x % 5 === 0 ? 1.05 : 0.94 + 0.06 * Math.sin(t * 9 + w);
};

const Body = ({ clip, w, h, seed }: { clip: Clip; w: number; h: number; seed: number }) => {
  const bars = clip.e - clip.s;
  let art: React.ReactNode = null;
  const wave = (env: (t: number, x: number) => number, rough?: number) => <path fill={clip.w} d={wavePath(w, h, seed, env, rough)} />;
  switch (clip.shape) {
    case 'song': art = wave(songEnv(w, clip.dips), 0.38); break;
    case 'voice': art = wave(burstEnv(clip.bursts ?? []), 0.2); break;
    case 'block': art = wave(() => 1.04, 0.05); break;
    case 'decay': art = wave(t => Math.exp(-t * 6), 0.1); break;
    case 'swell': art = wave(t => (t < 0.72 ? Math.pow(t / 0.72, 2) * 0.88 : 0.88 - (t - 0.72) * 1.4), 0.1); break;
    case 'blip': art = wave(t => (t < 0.7 ? Math.pow(t, 2.5) * 1.8 : 0.75 - (t - 0.7)), 0.1); break;
    case 'ramp': art = wave(t => Math.max(0, 1 - t * 1.15), 0.2); break;
    case 'bars': art = Array.from({ length: Math.floor(w / 3) }, (_, i) => <rect key={i} x={i * 3} y={0} width={i % 9 === 4 ? 1 : 2} height={h} fill={clip.w} />); break;
    case 'sparse': art = [5, 11, 18, 26, 29, 31, 38, 40, 42].filter(x => x < w).map(x => <rect key={x} x={x} y={0} width={2} height={h} fill={clip.w} />); break;
    case 'lines': art = Array.from({ length: Math.floor(w / 3) }, (_, i) => <rect key={i} x={i * 3 + 1} y={5} width={1} height={h - 5} fill={clip.w} />); break;
    case 'spindle': art = Array.from({ length: Math.floor(w / 3) }, (_, i) => (
      <path key={i} fill={clip.w} d={i % 3 === 2 ? `M${i * 3} 0h1l2 ${h / 3}v${h / 3}l-2 ${h / 3}h-1Z` : `M${i * 3 + 1} 0h1v${h}h-1Z`} />
    )); break;
    case 'pad': art = noteRects(PAD, bars, 8, false, clip.w, 3); break;
    case 'chords': art = noteRects(PAD, bars, 8, true, clip.w, 2); break;
    case 'bass': art = noteRects(BASS, bars, 8, true, clip.w, 3); break;
    case 'keys': art = noteRects(KEYS, bars, 8, false, clip.w, 1.5); break;
    case 'lead': art = noteRects(LEAD, bars, 18, false, clip.w, 2); break;
  }
  return <svg width={w} height={h} aria-hidden="true">{art}</svg>;
};

const ClipView = ({ clip, h, seed }: { clip: Clip; h: number; seed: number }) => {
  const left = px(clip.s);
  const width = px(clip.e) - left;
  const cut = ['bars', 'sparse', 'lines', 'spindle'].includes(clip.shape);
  return (
    <ClipBox style={{ left, width }}>
      <ClipHead $c={clip.c} $cut={cut}>
        {clip.icon === 'pattern' && <PatternIcon />}
        {clip.icon === 'audio' && <AudioIcon />}
        {clip.icon === 'auto' && <LinkGlyph color="#d5dae8" w={10} />}
        {clip.label && <ClipText $small={clip.icon === 'audio'}>{clip.label}</ClipText>}
      </ClipHead>
      <Body clip={clip} w={width} h={h - 17} seed={seed} />
    </ClipBox>
  );
};

const spans = (list: number[][], base: Omit<Clip, 's' | 'e'>): Clip[] => list.map(([s, e]) => ({ s, e, ...base }));
const at = (list: number[], len: number, base: Omit<Clip, 's' | 'e'>): Clip[] => spans(list.map(s => [s, s + len]), base);

const SECTIONS = [[1, 18], [18, 35], [35, 43], [43, 51], [51, 68], [68, 85], [85, 93], [93, 110], [111, 128], [128, 145]];
const LOOPS = [[1, 8], [9, 17], [18, 25], [26, 34], [35, 50], [51, 58], [59, 67], [68, 75], [76, 84], [85, 92], [93, 100], [101, 109], [111, 118], [119, 127], [128, 135], [136, 144]];
const HITS = [8, 17, 25, 34, 50, 58, 67, 75, 84, 92, 100, 109, 118, 127, 135, 144];
const KICKS = [18, 26, 35, 43, 51, 59, 68, 76, 85, 93, 101, 128, 136];
const ROLL = [[0, 1], [1, 2], [2, 3], [3, 4], [4, 5], [5, 5.5], [5.5, 6], [6, 6.5], [6.5, 8], [8, 10]];
const isIntro = (l: number[]) => l[0] === 1 || l[0] === 111;

const blue = { c: '#4d5b65', w: '#afc2cc', icon: 'audio' as const };
const sage = { c: '#566a52', w: '#b1c8ae', icon: 'audio' as const };

type Track = { name: string; h: number; strip: string; clips: Clip[] };
const LIT = '#9fb0be';
const DARK = '#35414c';
const tracks: Track[] = [
  { name: 'Track 7', h: 54, strip: LIT, clips: [
    { s: 0.6, e: 18.8, ...blue, shape: 'song', label: 'douyin_mu.._dereverb', dips: [25, 58] },
    { s: 34, e: 50.7, ...blue, shape: 'song', label: 'douyin_m..dereverb', dips: [2, 28, 52, 63] },
    { s: 50.7, e: 69, ...blue, shape: 'song', label: 'douyin_mus.._dereverb' },
    { s: 84.5, e: 128, ...blue, shape: 'song', label: 'douyin_music_ai_vocal_2545521882_bs_karaoke_dereverb', dips: [25, 168, 196] },
  ] },
  { name: 'Track 8', h: 54, strip: LIT, clips: [
    { s: 0.8, e: 18.8, ...sage, shape: 'voice', label: 'music_sam..41cc8eb6e', bursts: [[0, 15, 1], [26, 41, 1], [43, 50, 0.9], [53, 67, 1], [79, 93, 1], [102, 113, 0.65]] },
    { s: 34, e: 50.7, ...sage, shape: 'voice', label: 'music_sa..1cc8eb6e', bursts: [[55, 64, 0.5], [70, 75, 0.3], [83, 96, 0.6], [99, 108, 1]] },
    { s: 50.7, e: 69, ...sage, shape: 'voice', label: 'music_sami..41cc8eb6e', bursts: [[1, 15, 1], [27, 41, 1], [43, 51, 0.9], [53, 68, 1], [80, 94, 1], [102, 114, 0.65]] },
    { s: 84.5, e: 128, ...sage, shape: 'voice', label: 'music_sami_mss_vocal_ai_la..2f3-4cda-820f-2a341cc8eb6e', bursts: [[0, 9, 0.5], [15, 20, 0.3], [29, 41, 0.6], [45, 53, 1], [56, 70, 1], [81, 95, 1], [98, 105, 0.9], [108, 122, 1], [133, 148, 1], [157, 168, 0.65], [215, 222, 0.9], [226, 240, 1], [251, 266, 1]] },
  ] },
  { name: 'Track 9', h: 54, strip: DARK, clips: [{ s: 35, e: 68, c: '#605b99', w: '#9fa5d0', shape: 'keys', label: 'MIDI', icon: 'pattern' }] },
  { name: 'Track 10', h: 54, strip: DARK, clips: spans([[17, 35], [67, 85], [127, 145]], { c: '#9b6e5b', w: '#a39b96', shape: 'lead', label: 'Lead', icon: 'pattern' }) },
  { name: 'Track 11', h: 54, strip: LIT, clips: spans(SECTIONS, { c: '#99595c', w: '#8a7b83', shape: 'bass', label: 'Bass', icon: 'pattern' }) },
  { name: 'Track 12', h: 54, strip: '#55606a', clips: spans(SECTIONS.filter(s => s[0] !== 35), { c: '#8c955b', w: '#68725f', shape: 'chords', label: 'Chords', icon: 'pattern' }) },
  { name: 'Track 13', h: 54, strip: LIT, clips: spans(SECTIONS, { c: '#57958b', w: '#a5d3ce', shape: 'pad', label: 'Pad', icon: 'pattern' }) },
  { name: 'Track 14', h: 54, strip: DARK, clips: [
    ...spans(LOOPS.filter(isIntro), { c: '#53684f', w: '#b2c9ac', shape: 'sparse' }),
    ...spans(LOOPS.filter(l => !isIntro(l)), { c: '#53684f', w: '#b2c9ac', shape: 'bars' }),
  ] },
  { name: 'Track 15', h: 54, strip: DARK, clips: spans(LOOPS.map(([s, e]) => (s === 1 || s === 111 ? [s + 4, e] : [s, e])), { c: '#4b5867', w: '#a8bbca', shape: 'spindle' }) },
  { name: 'Track 16', h: 50, strip: LIT, clips: [
    ...spans(LOOPS.filter(isIntro), { c: '#75546c', w: '#cbb2c6', shape: 'block', icon: 'audio', label: ' 【 ..' }),
    ...spans(LOOPS.filter(l => !isIntro(l)).map(([s, e]) => (s === 35 ? [43, 50] : [s, e])), { c: '#594c66', w: '#b8a8c4', shape: 'lines' }),
  ] },
  { name: 'Track 17', h: 54, strip: DARK, clips: [
    { s: 0, e: 1, c: '#75546c', w: '#c6b0c9', shape: 'block' },
    { s: 38.7, e: 38.9, c: '#5c6a55', w: '#c9ccaa', shape: 'block' },
    ...at(HITS, 1, { c: '#4b635d', w: '#afc7cb', shape: 'block' }),
  ] },
  { name: 'Track 18', h: 54, strip: DARK, clips: at([0, 42, ...HITS], 1, { c: '#4b635d', w: '#b2cbc4', shape: 'blip' }) },
  { name: 'Track 19', h: 54, strip: DARK, clips: [
    ...spans([1, 111].flatMap(o => ROLL.map(([s, e]) => [s + o, e + o])), { c: '#7b5d52', w: '#d0bbb0', shape: 'decay', icon: 'audio' }),
    ...at(KICKS, 1.8, { c: '#7b5d52', w: '#d0bbb0', shape: 'decay', icon: 'audio' }),
  ] },
  { name: 'Track 20', h: 54, strip: DARK, clips: [
    ...at([6, 15, 23, 32, 56, 82, 90, 125, 142], 2, { c: '#74506f', w: '#c7b1c9', shape: 'block', icon: 'audio' }),
    ...at([48, 65, 73, 98, 107, 116, 133], 2, { c: '#454e85', w: '#c3b3cf', shape: 'block', icon: 'auto' }),
    { s: 145, e: 146, c: '#7b5d52', w: '#d0bbb0', shape: 'decay' },
  ] },
  { name: 'Track 21', h: 54, strip: DARK, clips: [
    ...spans([[1, 5.6], [111, 115.8]], { c: '#67536b', w: '#bcafc8', shape: 'decay', icon: 'audio' }),
    { s: 110, e: 111, c: '#67536b', w: '#bcafc8', shape: 'voice', bursts: [[-3, 9, 0.8]] },
    { s: 145, e: 146, c: '#67536b', w: '#bcafc8', shape: 'voice', bursts: [[0, 6, 0.35]] },
  ] },
  { name: 'Track 22', h: 54, strip: DARK, clips: at([5.5, 13.4, 22.5, 30.5, 39.5, 47.5, 55.5, 64.5, 72.5, 80.6, 89.5, 97.5, 105.6, 115.5, 123.5, 132.5, 141.4], 3.7, { c: '#627349', w: '#b9cba9', shape: 'swell', icon: 'audio' }) },
  { name: 'Track 23', h: 54, strip: LIT, clips: at([1, 9, ...KICKS, 111, 119], 4, { c: '#4f7068', w: '#b0cac4', shape: 'ramp', icon: 'audio' }) },
];

const GRID_BARS = 400;
const GridLines = () => (
  <GridSvg width={px(GRID_BARS)} height="100%" shapeRendering="crispEdges" aria-hidden="true">
    {Array.from({ length: GRID_BARS / 16 }, (_, i) => <rect key={`s${i}`} x={px(i * 16)} y={0} width={px(8)} height="100%" fill="#33434e" />)}
    {Array.from({ length: GRID_BARS }, (_, i) => <rect key={i} x={px(i)} y={0} width={1} height="100%" fill={i % 2 ? '#2a3843' : '#182631'} />)}
  </GridSvg>
);

const patterns = [
  { name: 'MIDI', c: '#5c5896' }, { name: 'MIDI', c: '#5c5896' }, { name: 'MIDI', c: '#5c5896' },
  { name: 'Bass', c: '#955759', sel: true, strip: true }, { name: 'Chords', c: '#8a935a' }, { name: 'Pad', c: '#549187', strip: true },
  { name: 'MIDI', c: '#5c5896' }, { name: 'Lead', c: '#996e5b' },
];

const mapBands: [number, number, number, number, string][] = [
  [3, 1, 122, 3, '#7e88a4'], [226, 1, 222, 3, '#7f84ac'], [558, 1, 287, 3, '#8088ac'],
  [7, 4, 224, 2, '#c08a6c'], [7, 6, 224, 2, '#aab780'], [231, 5, 52, 2, '#5b8f88'], [283, 4, 277, 2, '#c08a6c'], [283, 6, 443, 2, '#aab780'],
  [560, 5, 166, 2, '#c2ae74'], [733, 5, 112, 2, '#c2ae74'], [733, 7, 224, 1, '#8fb890'], [845, 4, 112, 3, '#c3876f'], [7, 10, 44, 2, '#8a7389'], [733, 10, 46, 2, '#8a7389'],
];

const PlaylistWindow = () => (
  <Playlist>
    <PlayHead>
      <IconButton $w={6} aria-label="Playlist menu"><Arrow color={INK} w={5} /></IconButton>
      <IconButton $w={32} aria-label="Snap"><Magnet color="#5fe39a" /></IconButton>
      <Spacer $w={8} />
      {playTools.map(([name, icon]) => <IconButton key={name} aria-label={name}>{icon}</IconButton>)}
      <Spacer $w={11} />
      <IconButton aria-label="Listen"><Speaker color="#9be23c" /></IconButton>
      <Crumb>播放列表 - Arrangement <Arrow color="#727a81" w={5} h={8} /> Bass <Arrow color="#727a81" w={5} h={8} /></Crumb>
      <Push $pr={10}>
        <IconButton $w={12} aria-label="Minimise"><Icon size={10} sw={4} d="M4 8h16" /></IconButton>
        <IconButton $w={12} aria-label="Maximise"><Icon size={11} sw={2.6}><path d="M2 4h20v16H2Z" /><path strokeWidth="5" d="M2 5h20" /></Icon></IconButton>
        <IconButton $w={12} aria-label="Close"><Icon size={11} sw={3.6} d="m3 3 18 18M21 3 3 21" /></IconButton>
      </Push>
    </PlayHead>
    <PlayBody>
      <Picker>
        <PickerTabs>
          <IconButton $w={31} aria-label="Patterns"><Piano /></IconButton>
          <IconButton $w={31} aria-label="Audio"><WaveGlyph color="#5a636a" w={19} /></IconButton>
          <IconButton $w={31} aria-label="Automation"><LinkGlyph /></IconButton>
        </PickerTabs>
        <PickerBox>
          <PatternList>
            {patterns.map((p, i) => (
              <PatternItem key={i} $c={p.c} $sel={p.sel} $strip={p.strip}>
                <Texture aria-hidden="true">{noteRects(i % 2 ? BASS : KEYS, 20, 8, false, i < 2 || i > 5 ? 'rgba(255,255,255,0.15)' : '#cdd8d4', 1).slice(8)}</Texture>
                {p.sel && <Selected><Arrow color="#ef3a62" w={8} h={11} /></Selected>}
                <PatternIcon />{p.name}
              </PatternItem>
            ))}
          </PatternList>
          <PickerScroll><ScrollButton $w={14} $h={15} aria-label="Scroll patterns">ı</ScrollButton></PickerScroll>
        </PickerBox>
        <AddPattern aria-label="Add pattern">+</AddPattern>
      </Picker>
      <Arranger>
        <ArrangerHead>
          <TabBlock>
            <AddTrack aria-label="Add track">+</AddTrack>
            <TabLabels>
              <TabLabel><WaveGlyph color="#626a71" w={18} />音频</TabLabel>
              <TabLabel><LinkGlyph color="#626a71" />通道</TabLabel>
              <TabLabel $on><Piano />样式</TabLabel>
            </TabLabels>
          </TabBlock>
          <RulerBlock>
            <MapRow>
              <ScrollButton $h={20} aria-label="Scroll left"><Chevron dir={180} /></ScrollButton>
              <MiniMap>
                <svg width="1078" height="19" aria-hidden="true">
                  {mapBands.map(([x, y, w, h, c], i) => <rect key={i} x={x} y={y} width={w} height={h} fill={c} />)}
                  {Array.from({ length: 60 }, (_, i) => <rect key={`n${i}`} x={7 + i * 16 + (i % 3) * 3} y={12 + (i * 7) % 4 + (i % 2)} width={12} height={1} fill="#74828b" />)}
                  {Array.from({ length: 60 }, (_, i) => <rect key={`m${i}`} x={7 + i * 16} y={9} width={11} height={1} fill="#65737c" />)}
                  <rect x={84} y={0} width={2} height={19} fill="#cfea3e" />
                </svg>
              </MiniMap>
              <ScrollButton $w={20} $h={20} aria-label="Scroll right"><Chevron /></ScrollButton>
              <ScrollButton $w={20} $h={20} aria-label="Playlist options">▪</ScrollButton>
            </MapRow>
            <RulerRow>
              <Ruler>
                {Array.from({ length: 22 }, (_, i) => <RulerMark key={i} style={{ width: px(i * 8 + 8) - px(i * 8) }}>{i * 8 + 1}</RulerMark>)}
                <HeadMarker><svg width="14" height="11" viewBox="0 0 14 11" aria-hidden="true"><path fill={GREEN} d="M0 0h14v2L8 10H6L0 2Z" /></svg></HeadMarker>
              </Ruler>
              <ScrollButton $w={20} aria-label="Scroll up"><Chevron dir={-90} /></ScrollButton>
            </RulerRow>
          </RulerBlock>
          <RightEdge />
        </ArrangerHead>
        <ArrangerBody>
          <TrackHeads>
            <Scrolled>
              {tracks.map(t => (
                <TrackHead key={t.name} $h={t.h}>
                  <TrackLabel>
                    {t.name}
                    <TrackFoot>...<Led $on aria-label={`Mute ${t.name}`} /></TrackFoot>
                  </TrackLabel>
                  <TrackStrip $c={t.strip} />
                </TrackHead>
              ))}
            </Scrolled>
          </TrackHeads>
          <Canvas>
            <GridLines />
            <Scrolled>
              {tracks.map((t, ti) => (
                <Lane key={t.name} $h={t.h}>
                  {t.clips.map((c, i) => <ClipView key={i} clip={c} h={t.h} seed={ti * 5 + (i % 4) + 1} />)}
                </Lane>
              ))}
            </Scrolled>
            <Playhead />
          </Canvas>
          <VScroll><VThumb /><Bottom><ScrollButton aria-label="Scroll down" $h={16}><Chevron dir={90} /></ScrollButton></Bottom></VScroll>
          <RightEdge />
        </ArrangerBody>
      </Arranger>
    </PlayBody>
  </Playlist>
);

const scopePath = (() => {
  const r = seeded(4);
  const pts: string[] = [];
  for (let x = 0; x <= 84; x += 1) {
    const t = x / 84;
    const base = 17 - 12 * Math.exp(-Math.pow((t - 0.3) / 0.12, 2)) + 9 * Math.exp(-Math.pow((t - 0.45) / 0.06, 2)) - 6 * Math.exp(-Math.pow((t - 0.7) / 0.16, 2)) + 8 * Math.max(0, t - 0.82) * 6;
    pts.push(`${x} ${(base + (r() - 0.5) * 7).toFixed(1)}`);
  }
  return `M${pts.join('L')}`;
})();

const menus = ['文件', '编辑', '添加', '样式', '视图', '选项', '工具', '帮助'];

export default function App() {
  return (
    <Frame>
      <GlobalStyle />
      <TopBar>
        <BarColumn $w={313}>
          <BarRow $pad="0 4px 0 0"><Grip /><MenuBar>{menus.map(m => <MenuButton key={m}>{m}</MenuButton>)}</MenuBar></BarRow>
          <BarRow $pad="0 4px 0 0">
            <Grip />
            <Hint>
              <HintLine>[    ] 田园 - 没有你我也可以过得好.zip</HintLine>
              <HintLine><span>126:05:08</span><span>Track 23</span></HintLine>
            </Hint>
          </BarRow>
        </BarColumn>
        <BarColumn $w={41}>
          <BarRow><Center><svg width="30" height="30" viewBox="0 0 30 30" aria-hidden="true"><circle cx="15" cy="15" r="10" fill="#343b42" stroke="#262c32" /><path fill="none" stroke="#c9d2d7" strokeWidth="2" d="M15 27.500A12.500 12.500 0 1 1 27 18" /><circle cx="20" cy="17" r="1" fill="#c9d2d7" /></svg></Center></BarRow>
          <BarRow><Center><svg width="34" height="34" viewBox="0 0 34 34" aria-hidden="true"><circle cx="17" cy="17" r="15.500" fill="none" stroke="#3a4249" strokeWidth="1.500" strokeDasharray="1.500 3" /><circle cx="17" cy="17" r="12.500" fill="#2e353b" /><circle cx="17" cy="17" r="9" fill="#444c54" /><path stroke="#c9d2d7" strokeWidth="1.500" d="M17 9v3" /></svg></Center></BarRow>
        </BarColumn>
        <BarColumn $w={195}>
          <BarRow $pad="0 3px">
            <Transport>
              <ModeButton aria-label="Song mode">PAT<ModeOn>SONG</ModeOn></ModeButton>
              <TransportButton $active aria-label="Pause"><svg width="8" height="8" aria-hidden="true"><path fill={GREEN} d="M0 0h3v8H0ZM5 0h3v8H5Z" /></svg></TransportButton>
              <TransportButton aria-label="Stop"><svg width="9" height="9" aria-hidden="true"><path fill="#e2e7e9" d="M0 0h9v9H0Z" /></svg></TransportButton>
            </Transport>
            <RecordButton aria-label="Record"><RecordDot /></RecordButton>
            <Tempo>130<Small>.000</Small></Tempo>
          </BarRow>
          <BarRow><Volume min={0} max={100} defaultValue={7} aria-label="Volume" /></BarRow>
        </BarColumn>
        <BarColumn>
          <BarRow $pad="0 4px">
            <Tools items={toolsTopLeft} />
            <TimePanel>0:23<TimeSide><TimeUnit>M:S:CS</TimeUnit><TimeMinor>:50</TimeMinor></TimeSide></TimePanel>
            <Divider />
            <Scope><svg width="84" height="31" viewBox="0 0 84 31" aria-hidden="true"><path d={scopePath} fill="none" stroke="#d2d9dc" strokeWidth="1.800" /></svg></Scope>
            <Meters><Meter /><Meter /><Knob size={9} angle={60} /></Meters>
            <Divider />
            <Cpu>
              <CpuCell><CpuBlock />33<svg width="80" height="8" aria-hidden="true"><path fill="none" stroke="#bfc7cb" d="M0 6h20l8-1 12 1h16l6 1h18" /></svg></CpuCell>
              <CpuCell $alt>1659 MB<br />12 <Dim>⬬</Dim></CpuCell>
            </Cpu>
            <Divider />
            <Tools items={toolsTopRight} tealLast />
          </BarRow>
          <BarRow $pad="0 4px">
            <Tools items={toolsBottomLeft} />
            <Magnet color="#747c83" w={17} />
            <SelectWrap><DarkSelect $w={62} aria-label="Snap mode" defaultValue="线"><option>线</option></DarkSelect><Arrow color="#5b646a" w={5} h={8} /></SelectWrap>
            <PatternBox>
              <PatternStep aria-label="Pattern menu"><Arrow color={INK} w={5} /></PatternStep>
              <PatternSelect aria-label="Pattern" defaultValue="Bass"><option>Bass</option></PatternSelect>
              <PatternStep aria-label="New pattern">+</PatternStep>
            </PatternBox>
            <Divider />
            <Tools items={toolsBottomRight} tealLast />
            <Divider />
            <News>
              <Dim>04/23</Dim>FLEX | Colors
              <Push><Icon size={20} sw={1.4} stroke="#aab4b7"><circle cx="11" cy="13" r="9" fill="#6f7f82" /><path fill="#b9c3c5" d="M4 8l7-2 2 4-4 3 3 4-2 4-3-5-4-3ZM15 12l4 1-2 5-3-2Z" /><circle cx="17" cy="6" r="6" fill="#2d3539" stroke="none" /><path stroke="#dfe5e7" d="M15 4.500 17.500 3v7" /></Icon></Push>
            </News>
          </BarRow>
        </BarColumn>
        <WindowButtons>
          <WindowButton aria-label="Minimise window"><Icon size={10} sw={4} d="M4 14h16" /></WindowButton>
          <WindowButton aria-label="Restore window"><Icon size={11} sw={3} d="M3 4h18v16H3ZM3 7h18" /></WindowButton>
          <WindowButton aria-label="Close window"><Icon size={10} sw={4} d="m3 3 18 18M21 3 3 21" /></WindowButton>
        </WindowButtons>
      </TopBar>
      <Work>
        <ChannelRack />
        <PlaylistWindow />
      </Work>
      <ImeBar>
        <ImeLogo aria-label="Input method">Q</ImeLogo>
        <ImeText>A</ImeText>
        <Icon size={13} fill="#50749f" stroke="none" d="M14 1c12 6 8 22-5 22-4 0-7-2-8-5 10 4 17-6 13-17Z" />
        <ImeText>·,</ImeText>
        <Icon size={16} stroke="#50749f" sw={2} d="M1 5h22v14H1ZM4 9h16M4 12h16M6 16h12" />
        <Icon size={13} fill="#50749f" stroke="none" d="M11 0h3v8h8l-5 4h5v2h-8v10h-3v-8H2l6-5H2V9h9Z" />
        <Icon size={13} fill="#50749f" stroke="none" d="M22 6l-4 3-3-3 3-5c-6-1-9 4-7 8L2 18c-2 3 2 6 4 4l9-9c5 1 9-2 7-7Z" />
      </ImeBar>
      <Watermark href="#">www.flpdown.com</Watermark>
    </Frame>
  );
}
